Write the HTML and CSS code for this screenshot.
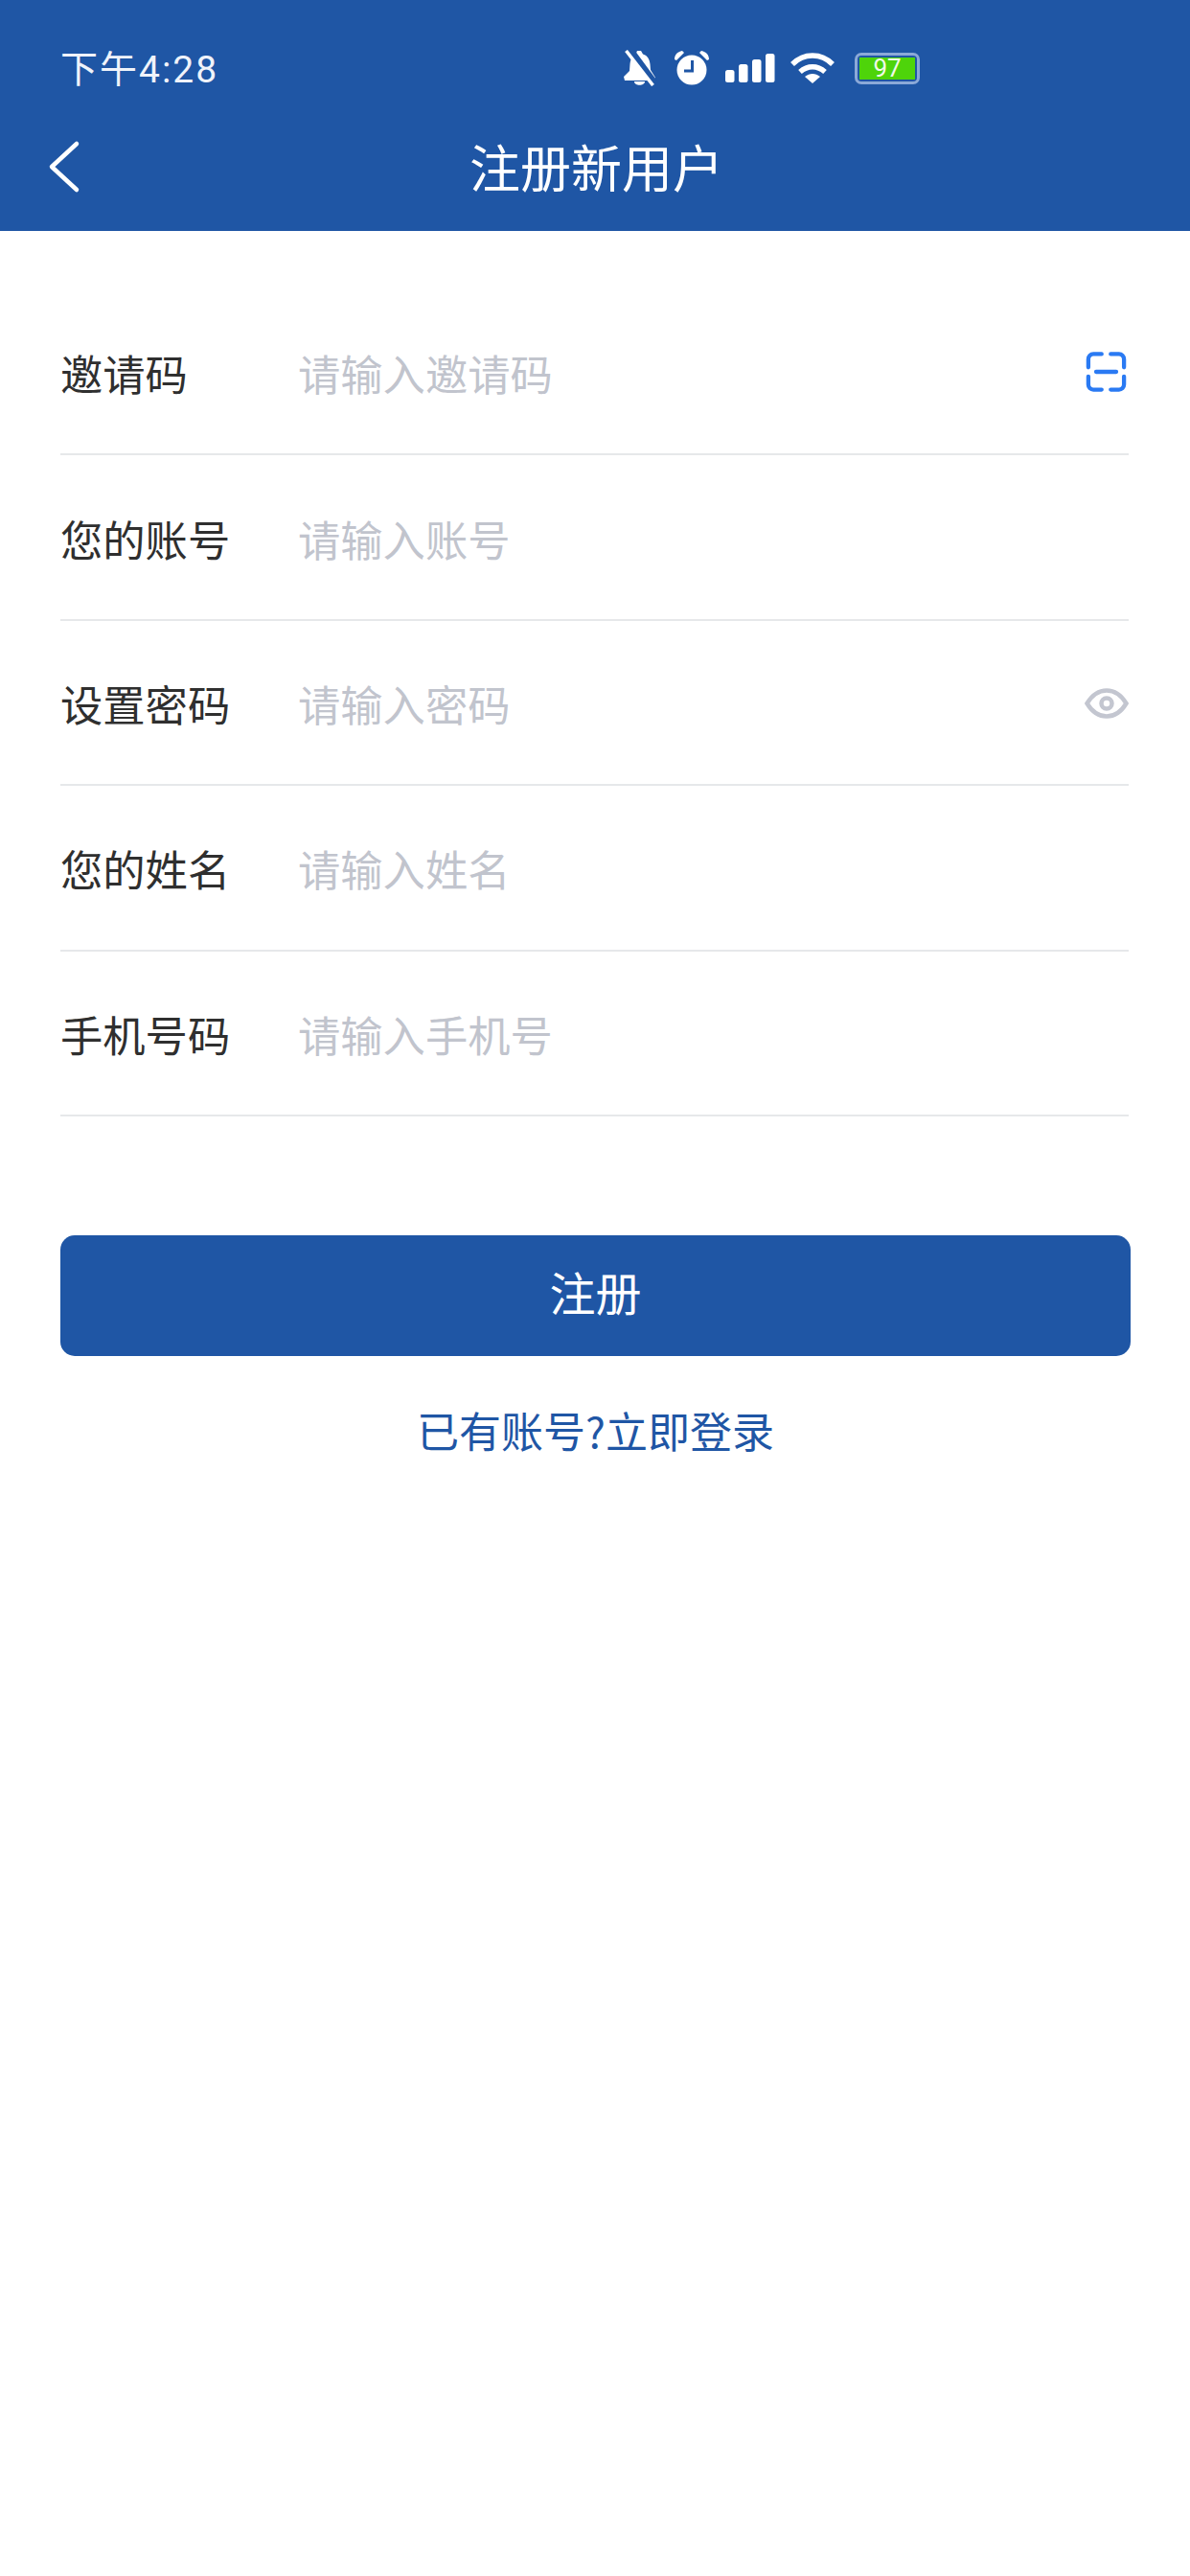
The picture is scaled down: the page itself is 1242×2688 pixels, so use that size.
FILE: index.html
```html
<!DOCTYPE html>
<html lang="zh-CN">
<head>
<meta charset="utf-8">
<title>注册新用户</title>
<link rel="stylesheet" href="styles.css">
</head>
<body>
<header class="header">
  <div class="status">
    <span class="time">下午4:28</span>
    <div class="status-icons">
      <svg class="i-bell" width="36" height="38" viewBox="0 0 36 38"><path fill="#fff" d="M15 1h4l2 3.500C26 6 28 10 28.500 15l.5 6 5 8-2 3H2l-1-4 6-6 .5-7C8 10 10 6 13.500 4.500zM12 33h11c0 5-11 5-11 0z"/><path stroke="#1f56a5" stroke-width="7" d="M7 -1l28 38"/><path stroke="#fff" stroke-width="3.500" d="M3.500 1l28 36"/></svg>
      <svg class="i-alarm" width="38" height="36" viewBox="0 0 38 36"><circle cx="19" cy="20" r="15.500" fill="#fff"/><path fill="#fff" d="M1 9C1 4 4 1 9 0l2 2-8 8zM37 9c0-5-3-8-8-9l-2 2 8 8z"/><path fill="none" stroke="#1f56a5" stroke-width="3" d="M19.500 10v11H11"/></svg>
      <svg class="i-signal" width="52" height="30" viewBox="0 0 52 30"><rect x="0" y="17" width="9.500" height="13" rx="2.500" fill="#fff"/><rect x="14" y="11" width="9.500" height="19" rx="2.500" fill="#fff"/><rect x="28" y="6" width="9.500" height="24" rx="2.500" fill="#fff"/><rect x="42" y="0" width="9.500" height="30" rx="2.500" fill="#fff"/></svg>
      <svg class="i-wifi" width="46" height="32" viewBox="0 0 46 32"><g fill="none" stroke="#fff" stroke-width="5.500"><path d="M2 12C14 0 32 0 44 12"/><path d="M10 20c8-7 18-7 26 0"/></g><path fill="#fff" d="M15 25c5-4 11-4 16 0l-8 7z"/></svg>
      <div class="battery"><span class="battery-level">97</span></div>
    </div>
  </div>
  <div class="navbar">
    <svg class="back" width="36" height="56" viewBox="0 0 36 56"><path fill="none" stroke="#fff" stroke-width="4.500" stroke-linecap="round" stroke-linejoin="round" d="M31 4L5 28l26 24"/></svg>
    <h1 class="title">注册新用户</h1>
  </div>
</header>
<main class="form">
  <div class="row">
    <span class="label">邀请码</span><span class="placeholder">请输入邀请码</span>
    <svg class="scan-icon" width="43" height="42" viewBox="0 0 44 44"><path fill="none" stroke="#2a7af3" stroke-width="4.500" stroke-linecap="round" d="M17 2.500H8a5.500 5.500 0 0 0-5.500 5.500v9M27 2.500h9a5.500 5.500 0 0 1 5.500 5.500v9M17 41.500H8A5.500 5.500 0 0 1 2.500 36v-9M27 41.500h9a5.500 5.500 0 0 0 5.500-5.500v-9M11 22h22"/></svg>
  </div>
  <div class="row"><span class="label">您的账号</span><span class="placeholder">请输入账号</span></div>
  <div class="row">
    <span class="label">设置密码</span><span class="placeholder">请输入密码</span>
    <svg class="eye-icon" width="46" height="32" viewBox="0 0 46 32"><path fill="none" stroke="#c3c6d0" stroke-width="4.500" d="M2.500 16C8 7 15 2.500 23 2.500S38 7 43.500 16C38 25 31 29.500 23 29.500S8 25 2.500 16z"/><circle cx="23" cy="16" r="5.500" fill="none" stroke="#c3c6d0" stroke-width="4.500"/></svg>
  </div>
  <div class="row"><span class="label">您的姓名</span><span class="placeholder">请输入姓名</span></div>
  <div class="row"><span class="label">手机号码</span><span class="placeholder">请输入手机号</span></div>
  <button class="submit" type="button">注册</button>
  <a class="login" href="#">已有账号?立即登录</a>
</main>
</body>
</html>
```
FILE: styles.css
```css
* { box-sizing: border-box; }
html, body { margin: 0; padding: 0; background: #fff; }
body {
  width: 1242px;
  height: 2688px;
  overflow: hidden;
  font-family: "Noto Sans CJK SC", "Noto Sans", sans-serif;
}
.header { height: 241px; background: #1f56a5; color: #fff; }
.status {
  height: 130px;
  padding: 46px 282px 0 63px;
  display: flex;
  align-items: flex-start;
  justify-content: space-between;
}
.time {
  margin-top: 2px;
  font-family: Roboto, "Noto Sans CJK SC", sans-serif;
  font-size: 39px;
  letter-spacing: 2px;
  line-height: 50px;
  color: #f0f3fa;
}
.status-icons { display: flex; align-items: center; height: 50px; }
.i-alarm { margin-left: 17px; }
.i-signal { margin-left: 16px; }
.i-wifi { margin-left: 16px; }
.battery {
  margin-left: 21px;
  width: 68px;
  height: 33px;
  border: 3px solid #8ba9d8;
  border-radius: 7px;
  padding: 2px;
  display: flex;
}
.battery-level {
  flex: 1;
  background: #4ed40a;
  font: 26px/23px Roboto, sans-serif;
  text-align: center;
  color: #f2fae8;
}
.navbar { position: relative; height: 111px; }
.back { position: absolute; left: 49px; top: 16px; }
.title {
  margin: 0;
  text-align: center;
  font-size: 53px;
  font-weight: 400;
  line-height: 70px;
  padding: 8px 0 0 3px;
  color: #fff;
}
.form { padding: 62px 63px 0; }
.row {
  height: 172.400px;
  border-bottom: 2px solid #e6e8ea;
  display: flex;
  align-items: center;
  width: 1115px;
}
.label { width: 248px; padding-top: 2px; font-size: 44.300px; color: #2f2f2f; }
.placeholder { flex: 1; padding-top: 2px; font-size: 44.300px; color: #c1c4cd; }
.scan-icon { margin-right: 2px; }
.eye-icon { margin-top: 3px; }
.submit {
  display: block;
  width: 1117px;
  height: 126px;
  margin-top: 124px;
  border: 0;
  border-radius: 15px;
  background: #1f56a5;
  color: #fff;
  font: 48px "Noto Sans CJK SC", sans-serif;
  padding: 0 0 10px;
}
.login {
  display: block;
  width: 1117px;
  margin-top: 47px;
  text-align: center;
  font-size: 44px;
  line-height: 60px;
  color: #1f56a5;
  text-decoration: none;
}
```
